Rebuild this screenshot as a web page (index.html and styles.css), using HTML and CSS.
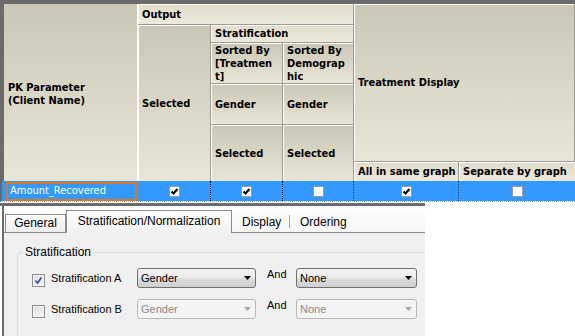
FILE: index.html
```html
<!DOCTYPE html>
<html>
<head>
<meta charset="utf-8">
<title>PK Parameter Stratification</title>
<link rel="stylesheet" href="styles.css">
</head>
<body>
<div class="grid">
  <div class="hdr">
    <div class="hc pk">PK Parameter<br>(Client Name)</div>
    <div class="hc output short">Output</div>
    <div class="hc osel">Selected</div>
    <div class="hc strat short">Stratification</div>
    <div class="hc sort1">Sorted By<br>[Treatmen<br>t]</div>
    <div class="hc sort2">Sorted By<br>Demograp<br>hic</div>
    <div class="hc g1">Gender</div>
    <div class="hc g2">Gender</div>
    <div class="hc s1">Selected</div>
    <div class="hc s2">Selected</div>
    <div class="hc td">Treatment Display</div>
    <div class="hc same short">All in same graph</div>
    <div class="hc sepg short">Separate by graph</div>
  </div>
  <div class="row">
    <div class="dc name"><span class="focus">Amount_Recovered</span></div>
    <div class="dc dark"><span class="gcb"><svg width="9" height="9" viewBox="0 0 9 9"><polyline points="1.5,4.5 3.5,6.5 7.5,2" fill="none" stroke="#000" stroke-width="2"/></svg></span></div>
    <div class="dc dark"><span class="gcb"><svg width="9" height="9" viewBox="0 0 9 9"><polyline points="1.5,4.5 3.5,6.5 7.5,2" fill="none" stroke="#000" stroke-width="2"/></svg></span></div>
    <div class="dc blue"><span class="gcb"></span></div>
    <div class="dc blue"><span class="gcb"><svg width="9" height="9" viewBox="0 0 9 9"><polyline points="1.5,4.5 3.5,6.5 7.5,2" fill="none" stroke="#000" stroke-width="2"/></svg></span></div>
    <div class="dc"><span class="gcb"></span></div>
  </div>
</div>

<div class="panel">
  <div class="pin">
    <div class="tabs">
      <div class="tab">General</div>
      <div class="tab active">Stratification/Normalization</div>
      <div class="tab plain disp">Display</div>
      <span class="tsep"></span>
      <div class="tab plain ord">Ordering</div>
    </div>
    <div class="page">
      <fieldset class="group">
        <legend>Stratification</legend>
        <div class="frow">
          <span class="wcb checked"><svg width="11" height="11" viewBox="0 0 11 11"><polyline points="2.5,5.5 4.5,8 8.5,2.5" fill="none" stroke="#3f5a96" stroke-width="1.8"/></svg></span>
          <span class="lbl">Stratification A</span>
          <div class="combo"><span class="ctext">Gender</span><svg class="arr" width="7" height="4" viewBox="0 0 7 4"><polygon points="0,0 7,0 3.5,4" fill="#000"/></svg></div>
          <span class="and">And</span>
          <div class="combo wide"><span class="ctext">None</span><svg class="arr" width="7" height="4" viewBox="0 0 7 4"><polygon points="0,0 7,0 3.5,4" fill="#000"/></svg></div>
        </div>
        <div class="frow">
          <span class="wcb"></span>
          <span class="lbl">Stratification B</span>
          <div class="combo off"><span class="ctext">Gender</span><svg class="arr" width="7" height="4" viewBox="0 0 7 4"><polygon points="0,0 7,0 3.5,4" fill="#a8a8a8"/></svg></div>
          <span class="and">And</span>
          <div class="combo wide off"><span class="ctext">None</span><svg class="arr" width="7" height="4" viewBox="0 0 7 4"><polygon points="0,0 7,0 3.5,4" fill="#a8a8a8"/></svg></div>
        </div>
      </fieldset>
    </div>
  </div>
</div>
</body>
</html>
```

FILE: styles.css
```css
* { box-sizing: border-box; }
html, body { margin: 0; padding: 0; background: #fff; }
body {
  width: 575px;
  height: 336px;
  overflow: hidden;
  font-family: "DejaVu Sans Condensed", "DejaVu Sans", sans-serif;
}

/* ---------- grid ---------- */
.grid {
  border-top: 4px solid #6b6b6b;
  border-left: 2px solid #6b6b6b;
  border-bottom: 1px dotted #9aa7b8;
}
.hdr {
  display: grid;
  grid-template-columns: 136px 73px 72px 71px 105px 116px;
  grid-template-rows: 21px 18px 41px 41px 37px 19px;
}
.hc {
  display: flex;
  align-items: center;
  padding-left: 4px;
  font-weight: bold;
  font-size: 11px;
  line-height: 13px;
  color: #000;
  background: linear-gradient(#cbc7b7, #e9e6d6);
  border-right: 1px solid #9e9c92;
  border-bottom: 1px solid #9e9c92;
  box-shadow: inset 1px 1px 0 #fff;
  white-space: nowrap;
}
.hc.short { background: linear-gradient(#e1ddcc, #ece9db); }
.pk {
  grid-column: 1; grid-row: 1 / 7;
  border-left: 2px solid #6b6b6b;
  border-right: 1px solid #fff;
  border-bottom: none;
  box-shadow: none;
  padding-left: 4px;
  padding-top: 2px;
}
.output { grid-column: 2 / 5; grid-row: 1; }
.osel { grid-column: 2; grid-row: 2 / 7; border-bottom: none; }
.strat { grid-column: 3 / 5; grid-row: 2; }
.sort1 { grid-column: 3; grid-row: 3; }
.sort2 { grid-column: 4; grid-row: 3; }
.g1 { grid-column: 3; grid-row: 4; }
.g2 { grid-column: 4; grid-row: 4; }
.s1 { grid-column: 3; grid-row: 5 / 7; border-bottom: none; }
.s2 { grid-column: 4; grid-row: 5 / 7; border-bottom: none; }
.td { grid-column: 5 / 7; grid-row: 1 / 6; }
.same { grid-column: 5; grid-row: 6; border-bottom: none; }
.sepg { grid-column: 6; grid-row: 6; border-right: none; border-bottom: none; }

.row {
  display: grid;
  grid-template-columns: 136px 73px 72px 71px 105px 116px;
  height: 20px;
  background: #3399ff;
}
.dc {
  display: flex;
  align-items: center;
  justify-content: center;
}
.dc.dark { border-right: 1px dotted #000; }
.dc.blue { border-right: 1px dotted #17406e; }
.name {
  display: block;
  padding: 1px 1px 0 4px;
}
.focus {
  display: block;
  height: 19px;
  border: 2px solid #d8792a;
  color: #fff;
  font-size: 11px;
  line-height: 14px;
  padding-left: 2px;
}
.gcb {
  width: 11px;
  height: 11px;
  background: #fff;
  border: 1px solid #9a9a9a;
  display: flex;
  align-items: center;
  justify-content: center;
}

/* ---------- tab panel ---------- */
.panel {
  width: 425px;
  height: 134px;
  margin-top: 1px;
  border-top: 3px solid #6b6b6b;
  padding-left: 2px;
  font-family: "Liberation Sans", Arial, sans-serif;
  color: #000;
}
.pin {
  height: 100%;
  border-left: 2px solid #6b6b6b;
  overflow: hidden;
  display: flex;
  flex-direction: column;
}
.tabs {
  height: 27px;
  flex: none;
  display: flex;
  align-items: flex-end;
  padding-left: 1px;
  border-bottom: 1px solid #898c95;
  background: linear-gradient(#ffffff, #f6f6f6);
}
.tab {
  height: 18px;
  width: 61px;
  border: 1px solid #898c95;
  border-bottom: none;
  background: linear-gradient(#fdfdfd, #eeeeee);
  font-size: 12px;
  line-height: 17px;
  text-align: center;
}
.tab.active {
  width: 166px;
  height: 23px;
  margin-bottom: -1px;
  background: linear-gradient(#ffffff, #f0f0f0);
  line-height: 21px;
}
.tab.plain {
  border: none;
  background: none;
  text-align: left;
}
.disp { width: 57px; padding-left: 10px; }
.tsep {
  width: 1px;
  height: 13px;
  margin-bottom: 4px;
  background: #a3a3a3;
}
.ord { width: 70px; padding-left: 10px; }

.page {
  flex: 1;
  background: #f0f0f0;
  padding-top: 12px;
}
.group {
  margin: 0 0 0 13px;
  padding: 0;
  width: 460px;
  min-width: 0;
  height: 120px;
  border: 1px solid #d5dfe5;
  border-radius: 3px;
}
.group legend {
  margin-left: 5px;
  padding: 0 2px;
  font-size: 12px;
  line-height: 14px;
}
.frow {
  display: flex;
  align-items: center;
  height: 20px;
  margin-top: 11px;
  padding-left: 14px;
}
.frow:first-of-type { margin-top: 9px; }
.wcb {
  flex: none;
  width: 13px;
  height: 13px;
  align-self: flex-start;
  margin-top: 6px;
  border: 1px solid #8e8f8f;
  background: linear-gradient(135deg, #dcdcdc, #f8f8f8);
  box-shadow: inset 0 0 0 1px #f4f4f4;
  display: flex;
  align-items: center;
  justify-content: center;
}
.lbl {
  width: 86px;
  margin-left: 6px;
  font-size: 11px;
  line-height: 13px;
}
.combo {
  flex: none;
  width: 119px;
  height: 20px;
  border: 1px solid #707070;
  border-radius: 3px;
  background: linear-gradient(#f3f3f3, #ebebeb 48%, #dddddd 52%, #d0d0d0);
  display: flex;
  align-items: center;
  justify-content: space-between;
  padding: 0 4px 0 3px;
  font-size: 11px;
}
.combo.wide { width: 121px; }
.combo.off {
  border-color: #b4b9bc;
  background: #f4f4f4;
  color: #8a8a8a;
}
.and {
  width: 29px;
  margin-left: 11px;
  align-self: flex-start;
  font-size: 11px;
  line-height: 13px;
}
```
